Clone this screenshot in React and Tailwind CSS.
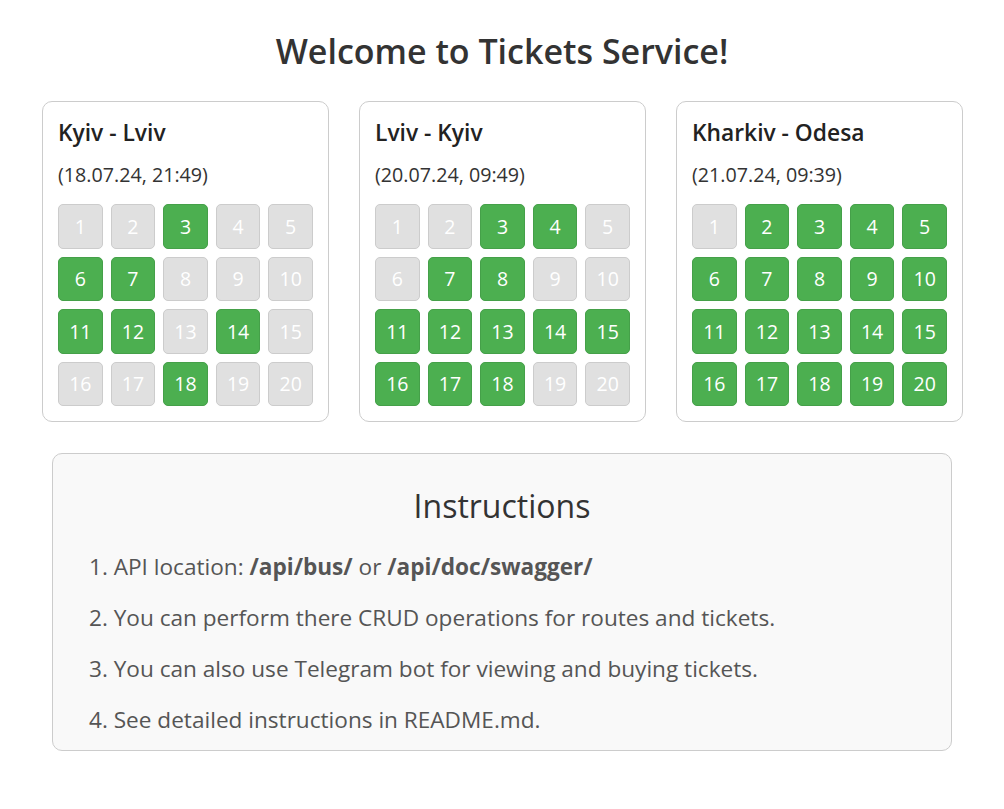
import React from "react";

const routes = [
  { title: "Kyiv - Lviv", date: "(18.07.24, 21:49)", free: [3, 6, 7, 11, 12, 14, 18] },
  { title: "Lviv - Kyiv", date: "(20.07.24, 09:49)", free: [3, 4, 7, 8, 11, 12, 13, 14, 15, 16, 17, 18] },
  { title: "Kharkiv - Odesa", date: "(21.07.24, 09:39)", free: [2, 3, 4, 5, 6, 7, 8, 9, 10, 11, 12, 13, 14, 15, 16, 17, 18, 19, 20] },
];

function Card({ r }) {
  const seats = Array.from({ length: 20 }, (_, i) => i + 1);
  return (
    <div className="w-[287px] rounded-[10px] border border-[#cccccc] bg-white px-[15px] pt-[16px] pb-[15px]">
      <div className="text-[22.8px] font-semibold leading-[30px] text-[#222]">{r.title}</div>
      <div className="mt-[14px] text-[19.7px] leading-[26px] text-[#333]">{r.date}</div>
      <div className="mt-[16px] grid grid-cols-5 gap-x-[8px] gap-y-[8px]">
        {seats.map((s) => {
          const ok = r.free.includes(s);
          return (
            <div
              key={s}
              className={
                "flex h-[44.5px] items-center justify-center rounded-[5px] border text-[19.5px] text-white " +
                (ok ? "border-[#45a049] bg-[#4caf50]" : "border-[#cccccc] bg-[#e0e0e0]")
              }
            >
              {s}
            </div>
          );
        })}
      </div>
    </div>
  );
}

export default function App() {
  return (
    <div className="min-h-screen bg-white pb-10" style={{ fontFamily: '"Open Sans", "Noto Sans", sans-serif' }}>
      <h1 className="pt-[26px] text-center text-[34px] font-semibold leading-[50px] text-[#333]">
        Welcome to Tickets Service!
      </h1>
      <div className="mt-[25px] flex justify-center gap-[30px] pl-px">
        {routes.map((r) => (
          <Card key={r.title} r={r} />
        ))}
      </div>
      <div className="mx-auto mt-[31px] w-[900px] rounded-[10px] border border-[#cccccc] bg-[#f9f9f9] px-[36px] pt-[30px] pb-[15px]">
        <h2 className="text-center text-[32px] font-medium leading-[44px] text-[#333]">Instructions</h2>
        <ol className="mt-[24px] text-[22.6px] leading-[30px] text-[#555]">
          <li className="mb-[21px]">
            1. API location: <b className="font-bold">/api/bus/</b> or <b className="font-bold">/api/doc/swagger/</b>
          </li>
          <li className="mb-[21px]">2. You can perform there CRUD operations for routes and tickets.</li>
          <li className="mb-[21px]">3. You can also use Telegram bot for viewing and buying tickets.</li>
          <li className="mb-[0px]">4. See detailed instructions in README.md.</li>
        </ol>
      </div>
    </div>
  );
}
